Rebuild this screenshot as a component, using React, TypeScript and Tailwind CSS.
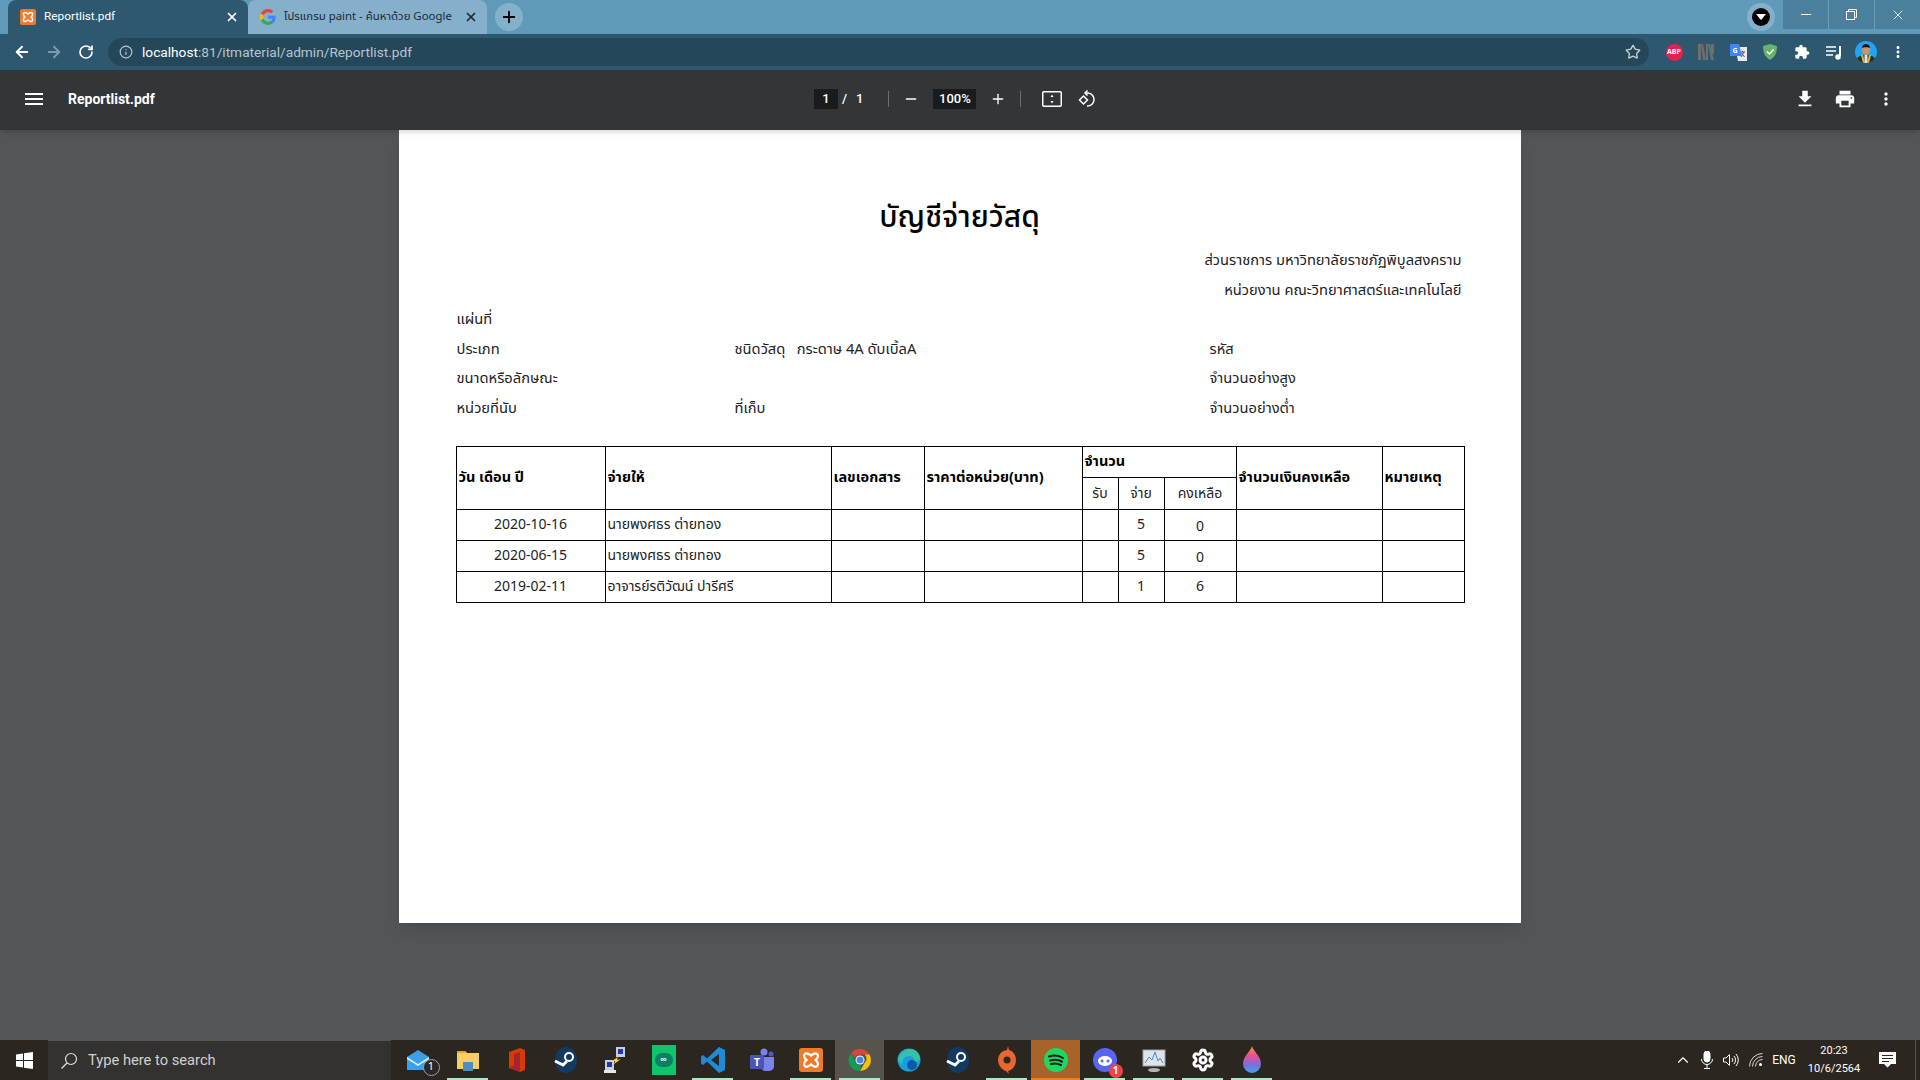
import { ArrowLeft, ArrowRight, RotateCw, Info, Star, X, Plus, Minus, ChevronUp, Settings } from 'lucide-react';
import type { ReactNode } from 'react';

const font = 'font-["Tahoma","Noto_Sans_Thai","Noto_Sans","Liberation_Sans",sans-serif]';

function XamppIcon({ size = 16 }: { size?: number }) {
  return (
    <svg width={size} height={size} viewBox="0 0 16 16">
      <rect width="16" height="16" rx="2" fill="#ee7a2c" />
      <path d="M5 3.500c1.300 0 2 .7 3 1.500 1-.8 1.700-1.500 3-1.500 1.200 0 1.800 1 1.500 2.500-.2 1-1 1.500-1.500 2 .5.500 1.300 1 1.500 2 .3 1.500-.3 2.500-1.500 2.500-1.300 0-2-.7-3-1.500-1 .8-1.700 1.500-3 1.500-1.200 0-1.800-1-1.500-2.500.2-1 1-1.500 1.500-2-.5-.5-1.300-1-1.500-2C3.200 4.500 3.800 3.500 5 3.500z" fill="none" stroke="#fff" strokeWidth="1.500" />
    </svg>
  );
}

function GoogleIcon() {
  return (
    <svg width="16" height="16" viewBox="0 0 48 48">
      <path fill="#EA4335" d="M24 9.500c3.500 0 6.700 1.300 9.100 3.500l6.800-6.800C35.800 2.400 30.300 0 24 0 14.600 0 6.500 5.400 2.600 13.200l7.900 6.100C12.400 13.600 17.700 9.500 24 9.500z" />
      <path fill="#4285F4" d="M47 24.500c0-1.600-.1-3.100-.4-4.500H24v9h12.900c-.6 3-2.200 5.500-4.700 7.200l7.700 6C44.400 38 47 31.800 47 24.500z" />
      <path fill="#FBBC05" d="M10.500 28.700c-.5-1.400-.8-3-.8-4.700s.3-3.300.8-4.700l-7.900-6.100C.9 16.500 0 20.100 0 24s.9 7.500 2.600 10.800z" />
      <path fill="#34A853" d="M24 48c6.500 0 11.900-2.100 15.900-5.800l-7.700-6c-2.200 1.400-4.900 2.300-8.200 2.300-6.300 0-11.600-4.100-13.500-9.800l-7.900 6.100C6.500 42.600 14.600 48 24 48z" />
    </svg>
  );
}

function ChromeIcon() {
  return (
    <svg width="24" height="24" viewBox="0 0 24 24">
      <path d="M12 1a11 11 0 0 1 9.500 5.500H12a5.500 5.500 0 0 0-5 3.200L3.300 4.800A11 11 0 0 1 12 1z" fill="#db4437" />
      <path d="M21.500 6.500A11 11 0 0 1 12 23l4.700-8.200a5.500 5.500 0 0 0 0-8.300z" fill="#f4c20d" />
      <path d="M3.300 4.800 7.800 14.800a5.500 5.500 0 0 0 5.200 2.700L12 23A11 11 0 0 1 3.300 4.800z" fill="#0f9d58" />
      <circle cx="12" cy="12" r="4.500" fill="#fff" />
      <circle cx="12" cy="12" r="3.500" fill="#4285f4" />
    </svg>
  );
}

function SteamIcon() {
  return (
    <svg width="24" height="28" viewBox="0 0 24 28">
      <ellipse cx="12" cy="14" rx="11" ry="13" fill="#123a63" />
      <circle cx="15" cy="11" r="4" fill="none" stroke="#fff" strokeWidth="2" />
      <path d="M1 15l8 4 4-4" fill="none" stroke="#fff" strokeWidth="3" />
    </svg>
  );
}

// material style icons, same set the chrome pdf viewer uses
function MatIcon({ d, size = 22 }: { d: string; size?: number }) {
  return (
    <svg width={size} height={size} viewBox="0 0 24 24" fill="#fff">
      <path d={d} />
    </svg>
  );
}

const mdMenu = 'M3 18h18v-2H3v2zm0-5h18v-2H3v2zm0-7v2h18V6H3z';
const mdDownload = 'M19 9h-4V3H9v6H5l7 7 7-7zM5 18v2h14v-2H5z';
const mdPrint = 'M19 8H5c-1.660 0-3 1.340-3 3v6h4v4h12v-4h4v-6c0-1.660-1.340-3-3-3zm-3 11H8v-5h8v5zm3-7c-.55 0-1-.45-1-1s.45-1 1-1 1 .45 1 1-.45 1-1 1zm-1-9H6v4h12V3z';
const mdDots = 'M12 8c1.100 0 2-.9 2-2s-.9-2-2-2-2 .9-2 2 .9 2 2 2zm0 2c-1.100 0-2 .9-2 2s.9 2 2 2 2-.9 2-2-.9-2-2-2zm0 6c-1.100 0-2 .9-2 2s.9 2 2 2 2-.9 2-2-.9-2-2-2z';
const mdPuzzle = 'M20.500 11H19V7c0-1.100-.9-2-2-2h-4V3.500C13 2.120 11.880 1 10.500 1S8 2.120 8 3.500V5H4c-1.100 0-1.990.9-1.990 2v3.800H3.500c1.490 0 2.700 1.210 2.700 2.700s-1.210 2.700-2.700 2.700H2V20c0 1.100.9 2 2 2h3.800v-1.500c0-1.490 1.210-2.700 2.700-2.700 1.490 0 2.700 1.210 2.700 2.700V22H17c1.100 0 2-.9 2-2v-4h1.500c1.380 0 2.500-1.120 2.500-2.500S21.880 11 20.500 11z';

type TaskItem = { icon: ReactNode; open?: boolean; active?: boolean; highlight?: boolean };

const taskItems: TaskItem[] = [
  {
    icon: (
      <div className="relative">
        <svg width="26" height="24" viewBox="0 0 26 24">
          <path d="M1 9 12 2l11 7v13H1z" fill="#3aa0e8" />
          <path d="M1 9l11 7 11-7v2L12 18 1 11z" fill="#d8eefc" />
        </svg>
        <span className="absolute -right-2 -bottom-1 flex h-[17px] w-[17px] items-center justify-center rounded-full border border-gray-400 bg-[#2b2722] text-[11px] text-white">1</span>
      </div>
    ),
  },
  {
    open: true,
    icon: (
      <svg width="24" height="22" viewBox="0 0 24 22">
        <path d="M1 2h8l2 2h12v16H1z" fill="#f6cf63" />
        <path d="M1 2h8l2 2H1z" fill="#e0a82e" />
        <rect x="7" y="13" width="10" height="9" fill="#4a8fc4" />
      </svg>
    ),
  },
  {
    icon: (
      <svg width="20" height="26" viewBox="0 0 20 26">
        <path d="M2 5 13 1l5 2v20l-5 2-11-4z" fill="#d83b01" />
        <path d="M2 21l11 4V5L7 7v11z" fill="#a4262c" />
      </svg>
    ),
  },
  { icon: <SteamIcon /> },
  {
    icon: (
      <svg width="24" height="28" viewBox="0 0 24 28">
        <rect x="13" y="1" width="9" height="10" fill="#c8d0e0" />
        <rect x="15" y="3" width="5" height="5" fill="#2535b0" />
        <rect x="2" y="14" width="9" height="10" fill="#c8d0e0" />
        <rect x="4" y="16" width="5" height="5" fill="#2535b0" />
        <rect x="1" y="24" width="12" height="3" fill="#e8e8e8" />
        <path d="M9 15l6-4-1 3 4-1-7 5 1-3z" fill="#f4d63a" />
      </svg>
    ),
  },
  {
    icon: (
      <div className="flex h-[30px] w-6 items-center justify-center bg-[#0fc46c]">
        <span className="flex h-3.5 w-[18px] items-center justify-center rounded-full bg-[#0d7f63] text-[9px] font-bold text-white">∞</span>
      </div>
    ),
  },
  {
    open: true,
    icon: (
      <svg width="26" height="28" viewBox="0 0 26 28">
        <path d="M19 1l6 3v20l-6 3L7 15.500l-4 3.500-2-1.500V10.500L3 9l4 3.500z" fill="#1f8ad6" />
        <path d="M19 8v12l-8-6z" fill="#2b2722" />
      </svg>
    ),
  },
  {
    icon: (
      <svg width="26" height="26" viewBox="0 0 26 26">
        <circle cx="15" cy="5" r="3.500" fill="#7b83eb" />
        <circle cx="22" cy="7" r="2.500" fill="#5059c9" />
        <path d="M11 10h14v8a5 5 0 0 1-5 6h-3a6 6 0 0 1-6-6z" fill="#7b83eb" />
        <rect x="1" y="8" width="14" height="14" rx="1" fill="#4b53bc" />
        <text x="8" y="19" fontSize="11" fontWeight="700" fill="#fff" textAnchor="middle">T</text>
      </svg>
    ),
  },
  { open: true, icon: <XamppIcon size={24} /> },
  { open: true, active: true, icon: <ChromeIcon /> },
  {
    icon: (
      <svg width="24" height="24" viewBox="0 0 24 24">
        <circle cx="12" cy="12" r="11.500" fill="#1b9de2" />
        <path d="M1 12C2 5 8 1 13 1c6 0 10 5 10 9 0 3-3 4-6 4 1-3-1-6-5-6-5 0-8 5-6 10z" fill="#35c1a8" />
        <circle cx="15" cy="17" r="5" fill="#0c5aa6" />
      </svg>
    ),
  },
  { icon: <SteamIcon /> },
  {
    open: true,
    icon: (
      <svg width="20" height="30" viewBox="0 0 20 30">
        <path d="M11 1l-1 4C4 6 1 10 1 15c0 5 4 10 8 11l3 3-1-3c5-1 8-6 8-11s-3-9-7-10z" fill="#e8662f" />
        <circle cx="10" cy="15" r="3.500" fill="#2b2722" />
      </svg>
    ),
  },
  {
    highlight: true,
    icon: (
      <svg width="24" height="24" viewBox="0 0 24 24">
        <circle cx="12" cy="12" r="12" fill="#1ed760" />
        <path d="M5 8.500c5-1.500 10-1 14 1.500M6 12.500c4-1 9-.8 12 1.200M7 16c3-.8 7-.6 10 1" fill="none" stroke="#1a1a1a" strokeWidth="2" strokeLinecap="round" />
      </svg>
    ),
  },
  {
    open: true,
    icon: (
      <div className="relative">
        <svg width="24" height="24" viewBox="0 0 24 24">
          <circle cx="12" cy="12" r="12" fill="#5865f2" />
          <ellipse cx="12" cy="13" rx="7" ry="5" fill="#fff" />
          <circle cx="9" cy="13" r="1.500" fill="#5865f2" />
          <circle cx="15" cy="13" r="1.500" fill="#5865f2" />
        </svg>
        <span className="absolute -right-1.5 -bottom-1.5 flex h-3.5 w-3.5 items-center justify-center rounded-full bg-[#e8464a] text-[10px] font-bold text-white">1</span>
      </div>
    ),
  },
  {
    open: true,
    icon: (
      <svg width="26" height="26" viewBox="0 0 26 26">
        <rect x="2" y="3" width="22" height="16" fill="#dfe4ea" stroke="#9aa2ac" />
        <path d="M4 16l4-6 3 3 3-8 3 9 2-3 3 5" fill="none" stroke="#4f86c6" />
        <ellipse cx="13" cy="23" rx="6" ry="2" fill="#aeb4bc" />
      </svg>
    ),
  },
  { open: true, icon: <Settings size={24} color="#fff" strokeWidth={3} /> },
  {
    open: true,
    icon: (
      <svg width="20" height="30" viewBox="0 0 20 30">
        <defs>
          <linearGradient id="drop" x1="0" y1="0" x2="0" y2="1">
            <stop offset="0" stopColor="#f29a3d" />
            <stop offset=".35" stopColor="#e8508f" />
            <stop offset=".7" stopColor="#7a6fe0" />
            <stop offset="1" stopColor="#3aa6e8" />
          </linearGradient>
        </defs>
        <path d="M10 1c1 5 9 10 9 18a9 9 0 0 1-18 0C1 11 9 6 10 1z" fill="url(#drop)" />
      </svg>
    ),
  },
];

const infoRows = [
  ['แผ่นที่', '', ''],
  ['ประเภท', 'ชนิดวัสดุ\u00a0\u00a0\u00a0กระดาษ 4A ดับเบิ้ลA', 'รหัส'],
  ['ขนาดหรือลักษณะ', '', 'จำนวนอย่างสูง'],
  ['หน่วยที่นับ', 'ที่เก็บ', 'จำนวนอย่างต่ำ'],
];

const rows = [
  ['2020-10-16', 'นายพงศธร ต่ายทอง', '5', '0'],
  ['2020-06-15', 'นายพงศธร ต่ายทอง', '5', '0'],
  ['2019-02-11', 'อาจารย์รติวัฒน์ ปารีศรี', '1', '6'],
];

const cell = 'border border-black p-0 px-0.5 align-middle';
const extSlot = 'flex w-8 shrink-0 justify-center';

export default function App() {
  return (
    <div className={`flex h-[1080px] w-[1920px] flex-col overflow-hidden bg-[#525659] ${font}`}>
      {/* tab strip */}
      <div className="flex h-[34px] shrink-0 items-end bg-[#5f9ab9] pl-2">
        <div className="flex h-[34px] w-[240px] items-center rounded-t-lg bg-[#2d5870] pl-3 pr-[9px] text-[11.800px] text-white">
          <XamppIcon />
          <span className="ml-2 flex-1 font-['Roboto']">Reportlist.pdf</span>
          <X size={14} strokeWidth={3} />
        </div>
        <div className="flex h-[34px] w-[239px] items-center rounded-t-lg bg-[#84b0cb] pl-3 pr-[9px] text-[11.400px] text-[#1c2a33]">
          <GoogleIcon />
          <span className="ml-2 flex-1 whitespace-nowrap">โปรแกรม paint - ค้นหาด้วย Google</span>
          <X size={14} strokeWidth={3} />
        </div>
        <div className="mb-[3px] ml-2 flex h-7 w-7 items-center justify-center rounded-full bg-[#84b0cb] text-black">
          <Plus size={18} strokeWidth={2.5} />
        </div>
        <div className="ml-auto mb-[3px] mr-2 flex h-7 w-7 items-center justify-center rounded-full bg-[#84b0cb]">
          <div className="flex h-[18px] w-[18px] items-center justify-center rounded-full bg-black">
            <div className="h-0 w-0 border-x-[5px] border-t-[6px] border-x-transparent border-t-white" />
          </div>
        </div>
        <div className="flex h-[29px] self-start bg-[#4a7f9d] text-white">
          <div className="flex w-[46px] items-center justify-center border-r border-[#6f9db8]">
            <span className="h-px w-[10px] bg-white" />
          </div>
          <div className="flex w-[46px] items-center justify-center border-r border-[#6f9db8]">
            <svg width="11" height="11" viewBox="0 0 11 11" fill="none" stroke="#fff">
              <path d="M2.500 2.500v-2h8v8h-2" />
              <rect x=".5" y="2.500" width="8" height="8" />
            </svg>
          </div>
          <div className="flex w-[45px] items-center justify-center"><X size={16} strokeWidth={1.2} /></div>
        </div>
      </div>

      {/* address bar */}
      <div className="flex h-9 shrink-0 items-center bg-[#2d5870] text-white">
        <div className="flex w-[108px] items-center pl-[13px]">
          <ArrowLeft size={18} strokeWidth={2.5} />
          <ArrowRight size={18} strokeWidth={2.5} className="ml-[14px] text-[#7f9cae]" />
          <RotateCw size={16} strokeWidth={2.5} className="ml-[15px]" />
        </div>
        <div className="flex h-7 w-[1541px] items-center rounded-full bg-[#25475a] pl-[11px] pr-2">
          <Info size={14} className="text-[#b8c8d2]" />
          <span className="ml-[9px] flex-1 font-['Roboto'] text-[13.700px] text-[#b5c5cf]">
            <span className="text-white">localhost</span>:81/itmaterial/admin/Reportlist.pdf
          </span>
          <Star size={16} strokeWidth={2} className="text-[#c5d1d9]" />
        </div>
        <div className="flex flex-1 items-center pl-[9px]">
          <div className={extSlot}>
            <div className="flex h-[17px] w-[17px] items-center justify-center rounded-full bg-[#e6204f] text-[7px] font-bold text-white">ABP</div>
          </div>
          <div className={extSlot}>
            <svg width="16" height="16" viewBox="0 0 16 16" fill="#6e6e6e">
              <path d="M0 0h3v16H0zM3 0h2l3 16H5zM8 0h2v16H8zM10 0h2l4 16h-3zM13 0h3v10h-3z" />
            </svg>
          </div>
          <div className={extSlot}>
            <svg width="17" height="17" viewBox="0 0 17 17">
              <path d="M5 3h12v14H8z" fill="#e8eaed" />
              <path d="M10 8h5M12.500 7v1M11 13l3-5M11.500 9l3 4" fill="none" stroke="#555" />
              <path d="M0 0h9l3 12H0z" fill="#4285f4" />
              <text x="5" y="9" fontSize="7" fontWeight="700" fill="#fff" textAnchor="middle">G</text>
            </svg>
          </div>
          <div className={extSlot}>
            <svg width="16" height="18" viewBox="0 0 16 18">
              <path d="M8 1l7 2c0 7-2 11-7 14C3 14 1 10 1 3z" fill="#68b36b" />
              <path d="M5 8.500l2.500 2.500L11.500 6.500" fill="none" stroke="#fff" strokeWidth="1.500" />
            </svg>
          </div>
          <div className={extSlot}><MatIcon d={mdPuzzle} size={16} /></div>
          <div className={extSlot}>
            <svg width="17" height="15" viewBox="0 0 17 15" fill="none" stroke="#fff" strokeWidth="1.500">
              <path d="M0 2h10M0 6h10M0 10h7" />
              <path d="M14 1v10" strokeWidth="2" />
              <circle cx="12" cy="12" r="2" fill="#fff" />
            </svg>
          </div>
          <div className={extSlot}>
            <svg width="22" height="22" viewBox="0 0 22 22">
              <defs>
                <clipPath id="avatar"><circle cx="11" cy="11" r="11" /></clipPath>
              </defs>
              <g clipPath="url(#avatar)">
                <rect width="22" height="22" fill="#22a4f0" />
                <path d="M1 22c0-6 4-8 10-8s10 2 10 8z" fill="#2c2c20" />
                <path d="M7 14l2 8M15 14l-2 8" stroke="#d8b93a" strokeWidth="2" />
                <rect x="9.500" y="14" width="3" height="8" fill="#dfe6ea" />
                <ellipse cx="11" cy="9" rx="4" ry="5" fill="#c9946c" />
                <path d="M7 7c0-3 2-4 4-4s4 1 4 4c-2-1-6-1-8 0z" fill="#1a1a1a" />
              </g>
            </svg>
          </div>
          <div className={extSlot}><MatIcon d={mdDots} size={18} /></div>
        </div>
      </div>

      {/* pdf toolbar */}
      <div className="relative z-10 flex h-[60px] shrink-0 items-center bg-[#323639] pb-0.5 text-white shadow-md">
        <div className="ml-[22px]"><MatIcon d={mdMenu} size={24} /></div>
        <span className="ml-[22px] w-[300px] font-['Roboto'] text-sm font-bold">Reportlist.pdf</span>
        <div className="ml-[446px] flex items-center font-['Roboto'] text-[13px] font-medium">
          <span className="flex h-[20px] w-6 items-center justify-center bg-[#191b1c]">1</span>
          <span className="ml-1">/</span>
          <span className="ml-[9px]">1</span>
          <span className="ml-[25px] h-[16px] w-px bg-[#6b6f72]" />
          <Minus size={16} strokeWidth={2} className="ml-[14px]" />
          <span className="ml-[14px] flex h-[20px] w-[43px] items-center justify-center bg-[#191b1c]">100%</span>
          <Plus size={16} strokeWidth={2} className="ml-[14px]" />
          <span className="ml-[14px] h-[16px] w-px bg-[#6b6f72]" />
          <svg width="20" height="16" viewBox="0 0 20 16" className="ml-[21px]" fill="none" stroke="#fff" strokeWidth="1.500">
            <rect x=".75" y=".75" width="18.500" height="14.500" rx="1" />
            <path d="M10 3.500 8.500 6h3zM10 12.500 8.500 10h3z" fill="#fff" stroke="none" />
          </svg>
          <svg width="18" height="18" viewBox="0 0 18 18" className="ml-[16px]" fill="none" stroke="#fff" strokeWidth="1.500">
            <path d="M7 3h3a6.500 6.500 0 1 1-1 13" />
            <path d="M9.500 .5 7 3l2.500 2.500" />
            <path d="M5.500 6 9.500 10 5.500 14 1.500 10z" />
          </svg>
        </div>
        <div className="ml-auto mr-[24px] flex items-center gap-[18px]">
          <MatIcon d={mdDownload} />
          <MatIcon d={mdPrint} />
          <div className="ml-[2px]"><MatIcon d={mdDots} size={20} /></div>
        </div>
      </div>

      {/* viewer */}
      <div className="flex flex-1 justify-center">
        <div className="mr-[1px] h-[793px] w-[1122px] bg-white px-[57px] pt-[72px] text-[14.700px] text-[#222] shadow-lg">
          <h1 className="text-center text-[30px] font-medium leading-[32px] text-black">บัญชีจ่ายวัสดุ</h1>
          <div className="mt-3 pr-[2px] text-right leading-[29.500px]">
            <p>ส่วนราชการ มหาวิทยาลัยราชภัฏพิบูลสงคราม</p>
            <p>หน่วยงาน คณะวิทยาศาสตร์และเทคโนโลยี</p>
          </div>
          <div className="grid grid-cols-[278px_475px_1fr] pl-[1px] leading-[29.500px]">
            {infoRows.map((r) => r.map((t, i) => <div key={r[0] + i} className="h-[29.500px]">{t}</div>))}
          </div>
          <table className="mt-[23px] w-[1008px] table-fixed border-collapse border border-black text-sm leading-none">
            <colgroup>
              <col className="w-[149px]" />
              <col className="w-[226px]" />
              <col className="w-[93px]" />
              <col className="w-[158px]" />
              <col className="w-[36px]" />
              <col className="w-[46px]" />
              <col className="w-[72px]" />
              <col className="w-[146px]" />
              <col className="w-[82px]" />
            </colgroup>
            <thead>
              <tr className="h-[31px] text-left text-[14.500px] text-black">
                <th rowSpan={2} className={cell}>วัน เดือน ปี</th>
                <th rowSpan={2} className={cell}>จ่ายให้</th>
                <th rowSpan={2} className={cell}>เลขเอกสาร</th>
                <th rowSpan={2} className={cell}>ราคาต่อหน่วย(บาท)</th>
                <th colSpan={3} className={cell}>จำนวน</th>
                <th rowSpan={2} className={cell}>จำนวนเงินคงเหลือ</th>
                <th rowSpan={2} className={cell}>หมายเหตุ</th>
              </tr>
              <tr className="h-[32px] text-center font-normal">
                <td className={cell}>รับ</td>
                <td className={cell}>จ่าย</td>
                <td className={cell}>คงเหลือ</td>
              </tr>
            </thead>
            <tbody>
              {rows.map((r, i) => (
                <tr key={r[0]} className="h-[31px]">
                  <td className={`${cell} text-center`}>{r[0]}</td>
                  <td className={cell}>{r[1]}</td>
                  <td className={cell} />
                  <td className={cell} />
                  <td className={cell} />
                  <td className={`${cell} text-center`}>{r[2]}</td>
                  <td className={`${cell} text-center ${i < 2 ? 'pt-1' : ''}`}>{r[3]}</td>
                  <td className={cell} />
                  <td className={cell} />
                </tr>
              ))}
            </tbody>
          </table>
        </div>
      </div>

      {/* taskbar */}
      <div className="flex h-10 shrink-0 items-stretch bg-[#2b2620] text-white">
        <div className="flex w-12 items-center justify-center">
          <svg width="17" height="17" viewBox="0 0 17 17" fill="#fff">
            <path d="M0 2.500 7 1.500v6.500H0zM8 1.300 17 0v8H8zM0 9h7v6.500L0 14.500zM8 9h9v8l-9-1.300z" />
          </svg>
        </div>
        <div className="flex w-[343px] items-center border-t border-[#55534f] bg-[#333230] pl-[12px] font-['Roboto'] text-[14.700px] text-[#d0d0d0]">
          <svg width="18" height="18" viewBox="0 0 18 18" fill="none" stroke="#e0e0e0" strokeWidth="1.200">
            <circle cx="11" cy="7" r="5.500" />
            <path d="M7 11 1.500 16.500" />
          </svg>
          <span className="ml-[10px]">Type here to search</span>
        </div>
        <div className="ml-[3px] flex">
          {taskItems.map((t, i) => (
            <div
              key={i}
              className={`relative flex w-[49px] items-center justify-center ${t.active ? 'bg-[#57534d]' : ''} ${t.highlight ? 'bg-[#a7632a]' : ''}`}
            >
              {t.icon}
              {(t.open || t.active) && <span className="absolute inset-x-[4px] bottom-0 h-0.5 bg-[#a5ecc4]" />}
              {t.highlight && <span className="absolute inset-x-0 bottom-0 h-0.5 bg-[#ff7a10]" />}
            </div>
          ))}
        </div>
        <div className="ml-auto flex items-center">
          <div className="flex w-6 justify-center"><ChevronUp size={18} strokeWidth={1.5} /></div>
          <div className="flex w-6 justify-center">
            <svg width="12" height="18" viewBox="0 0 12 18" fill="none" stroke="#fff">
              <rect x="3" y="0" width="6" height="11" rx="3" fill="#fff" />
              <path d="M.5 8a5.500 5.500 0 0 0 11 0M6 13.500V17M3 17.500h6" />
            </svg>
          </div>
          <div className="flex w-6 justify-center">
            <svg width="17" height="14" viewBox="0 0 17 14" fill="none" stroke="#fff">
              <path d="M.5 5h2.500l3.500-3.500v11L3 9H.5z" />
              <path d="M9 5a3 3 0 0 1 0 4M11 3a6 6 0 0 1 0 8M13 1a9 9 0 0 1 0 12" />
            </svg>
          </div>
          <div className="ml-px flex w-6 justify-center">
            <svg width="14" height="14" viewBox="0 0 14 14" fill="none" stroke="#d8d8d8">
              <path d="M.5 13.500A13 13 0 0 1 13.500.5M3.500 13.500A10 10 0 0 1 13.500 3.500M6.500 13.500A7 7 0 0 1 13.500 6.500" />
              <circle cx="11.500" cy="11.500" r="1.500" fill="#fff" stroke="none" />
            </svg>
          </div>
          <span className="w-8 text-center font-['Roboto'] text-xs">ENG</span>
          <div className="ml-2 flex w-[52px] flex-col items-center font-['Roboto'] text-[11px] leading-[18px]">
            <span>20:23</span>
            <span>10/6/2564</span>
          </div>
          <div className="ml-2 flex w-[38px] justify-center">
            <svg width="17" height="16" viewBox="0 0 17 16" fill="#fff">
              <path d="M0 0h17v12h-5l-3.500 3.500L5 12H0z" />
              <path d="M3 3.500h11M3 6.500h11M3 9.500h7" stroke="#2b2620" />
            </svg>
          </div>
          <span className="ml-[9px] mr-1 h-full w-px bg-[#55534f]" />
        </div>
      </div>
    </div>
  );
}
